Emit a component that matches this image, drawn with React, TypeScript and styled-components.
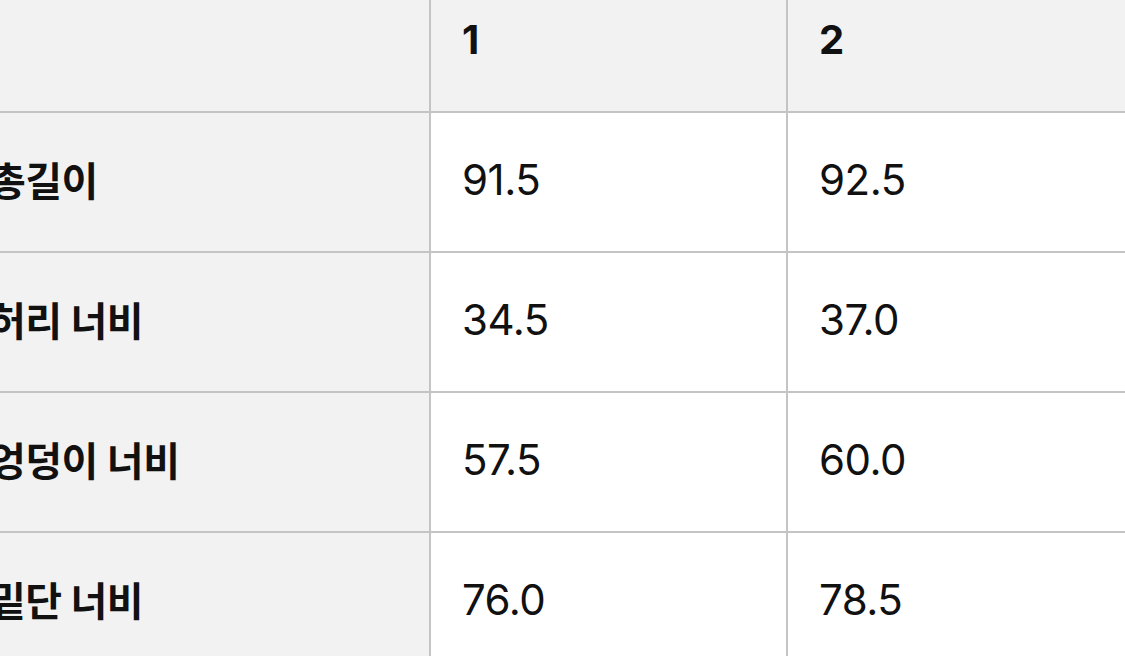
import React, { FC } from 'react';
import styled, { createGlobalStyle } from 'styled-components';

//region styled

const GlobalStyle = createGlobalStyle`
  html, body {
    margin: 0;
    padding: 0;
    background: #ffffff;
    overflow: hidden;
  }
  body {
    font-family: Inter, "Noto Sans CJK KR", "Liberation Sans", sans-serif;
    color: #111111;
  }
`;

const Viewport = styled.div`
  width: 1125px;
  height: 656px;
  overflow: hidden;
`;

const Table = styled.table`
  border-collapse: collapse;
  margin: -29px 0 0 -48px;
  table-layout: fixed;
  width: 1191px;
`;

const Col = styled.col<{ $width: number }>`
  width: ${(p) => p.$width}px;
`;

const Cell = styled.td<{ $shade?: boolean; $bold?: boolean; $pad?: number }>`
  height: 140px;
  padding: 0 0 6px ${(p) => p.$pad ?? 31}px;
  box-sizing: border-box;
  border: 2px solid #c4c4c4;
  background: ${(p) => (p.$shade ? '#f2f2f2' : '#ffffff')};
  font-size: ${(p) => (p.$bold ? '40px' : '42px')};
  font-weight: ${(p) => (p.$bold ? 700 : 400)};
  letter-spacing: -0.5px;
  white-space: nowrap;
  text-align: left;
  vertical-align: middle;
`;

//endregion

interface Row {
  label: string;
  values: string[];
}

const sizes = ['1', '2'];

const rows: Row[] = [
  { label: '총길이', values: ['91.5', '92.5'] },
  { label: '허리 너비', values: ['34.5', '37.0'] },
  { label: '엉덩이 너비', values: ['57.5', '60.0'] },
  { label: '밑단 너비', values: ['76.0', '78.5'] },
];

const App: FC = () => {
  return (
    <Viewport>
      <GlobalStyle />
      <Table>
        <colgroup>
          <Col $width={477} />
          <Col $width={357} />
          <Col $width={357} />
        </colgroup>
        <thead>
          <tr>
            <Cell as="th" $shade $bold />
            {sizes.map((size) => (
              <Cell as="th" key={size} $shade $bold>
                {size}
              </Cell>
            ))}
          </tr>
        </thead>
        <tbody>
          {rows.map((row) => (
            <tr key={row.label}>
              <Cell as="th" $shade $bold $pad={35}>
                {row.label}
              </Cell>
              {row.values.map((value, i) => (
                <Cell key={i}>{value}</Cell>
              ))}
            </tr>
          ))}
        </tbody>
      </Table>
    </Viewport>
  );
};

export default App;
